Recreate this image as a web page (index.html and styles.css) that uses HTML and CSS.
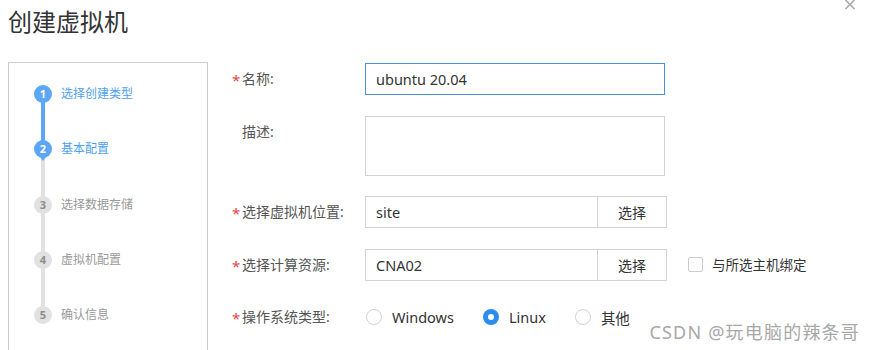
FILE: index.html
```html
<!DOCTYPE html>
<html lang="zh-CN">
<head>
  <meta charset="UTF-8" />
  <meta name="viewport" content="width=device-width, initial-scale=1" />
  <title>创建虚拟机</title>
  <link rel="stylesheet" href="styles.css">
</head>
<body>
  <div class="dialog">
    <h1 class="dialog-title">创建虚拟机</h1>
    <svg class="close" width="12" height="10" viewBox="0 0 12 10">
      <path d="M1.5 0 L10.5 9 M10.5 0 L1.5 9" stroke="#aaa" stroke-width="1.6" fill="none" />
    </svg>

    <div class="dialog-body">
      <ul class="steps">
        <li class="step active"><span class="dot">1</span>选择创建类型</li>
        <li class="step active current"><span class="dot">2</span>基本配置</li>
        <li class="step"><span class="dot">3</span>选择数据存储</li>
        <li class="step"><span class="dot">4</span>虚拟机配置</li>
        <li class="step last"><span class="dot">5</span>确认信息</li>
      </ul>

      <div class="form">
        <div class="row">
          <label class="label"><i class="req">*</i>名称:</label>
          <div class="input focus">ubuntu 20.04</div>
        </div>
        <div class="row">
          <label class="label">描述:</label>
          <div class="textarea"></div>
        </div>
        <div class="row">
          <label class="label"><i class="req">*</i>选择虚拟机位置:</label>
          <div class="picker">
            <div class="input">site</div>
            <button class="pick-btn">选择</button>
          </div>
        </div>
        <div class="row">
          <label class="label"><i class="req">*</i>选择计算资源:</label>
          <div class="picker">
            <div class="input">CNA02</div>
            <button class="pick-btn">选择</button>
          </div>
          <span class="check"><span class="box"></span>与所选主机绑定</span>
        </div>
        <div class="row">
          <label class="label"><i class="req">*</i>操作系统类型:</label>
          <div class="radios">
            <span class="radio"><span class="circle"></span>Windows</span>
            <span class="radio on"><span class="circle"></span>Linux</span>
            <span class="radio"><span class="circle"></span>其他</span>
          </div>
        </div>
      </div>
    </div>
  </div>

  <div class="watermark">CSDN @玩电脑的辣条哥</div>
</body>
</html>
```

FILE: styles.css
```css
body {
  margin: 0;
  background: #fff;
  color: #333;
  font-family: "Noto Sans", "Noto Sans CJK SC", sans-serif;
  overflow: hidden;
}
.dialog { position: relative; padding: 0 8px; }
.dialog-title {
  margin: 0;
  height: 62px;
  padding-top: 6px;
  box-sizing: border-box;
  font-size: 24px;
  font-weight: normal;
  color: #333;
  line-height: 32px;
}
.close {
  position: absolute;
  top: 0;
  right: 17px;
}
.dialog-body { display: flex; }

.steps {
  list-style: none;
  margin: 0;
  padding: 22px 0 0 25px;
  width: 200px;
  height: 300px;
  box-sizing: border-box;
  border: 1px solid #ccc;
}
.step {
  position: relative;
  display: flex;
  gap: 9px;
  height: 55.3px;
  align-items: flex-start;
  font-size: 12px;
  line-height: 18px;
  color: #999;
}
.step::after {
  content: "";
  position: absolute;
  left: 7px;
  top: 12px;
  width: 4px;
  height: 55px;
  background: #e1e1e1;
}
.step.last::after { display: none; }
.step.active { color: #4d9ff2; }
.step.active::after { background: #5ba6f7; }
.step.current::after { background: #e1e1e1; }
.dot {
  position: relative;
  z-index: 1;
  width: 18px;
  height: 18px;
  border-radius: 50%;
  background: #e1e1e1;
  color: #8c8c8c;
  font-size: 11px;
  font-weight: bold;
  text-align: center;
  line-height: 18px;
}
.step.active .dot { background: #5ba6f7; color: #fff; }
.step.current .dot::after {
  content: "";
  position: absolute;
  left: 4px;
  top: 14px;
  border-left: 5px solid transparent;
  border-right: 5px solid transparent;
  border-top: 7px solid #5ba6f7;
}

.form {
  display: flex;
  flex-direction: column;
  gap: 20.5px;
  padding: 1px 0 0 22px;
  font-size: 14px;
}
.row { display: flex; align-items: flex-start; }
.label {
  width: 135px;
  line-height: 32px;
  color: #555;
  padding-left: 12px;
  box-sizing: border-box;
  position: relative;
}
.req {
  position: absolute;
  left: 2px;
  top: 1px;
  font-style: normal;
  color: #e2474a;
  font-size: 15px;
}
.input {
  width: 300px;
  height: 32px;
  box-sizing: border-box;
  border: 1px solid #d2d2d2;
  padding: 0 10px;
  line-height: 30px;
  font-size: 14.5px;
  color: #333;
}
.input.focus { border-color: #4a90d9; }
.textarea {
  width: 300px;
  height: 60px;
  box-sizing: border-box;
  border: 1px solid #d2d2d2;
}
.picker { display: flex; }
.picker .input { width: 232px; border-right: none; }
.pick-btn {
  width: 70px;
  height: 32px;
  border: 1px solid #d2d2d2;
  background: #fff;
  font: inherit;
  color: #333;
  padding: 0;
}
.check {
  display: flex;
  align-items: center;
  gap: 9px;
  margin-left: 21px;
  line-height: 32px;
  color: #333;
  font-size: 13.5px;
}
.box {
  width: 15px;
  height: 15px;
  box-sizing: border-box;
  border: 1px solid #ccc;
  border-radius: 2px;
}
.radios { display: flex; height: 32px; align-items: center; padding-left: 1px; }
.radio {
  display: flex;
  align-items: center;
  gap: 10px;
  margin-right: 29px;
  color: #333;
  font-size: 14.5px;
}
.circle {
  width: 16px;
  height: 16px;
  box-sizing: border-box;
  border: 1px solid #d2d2d2;
  border-radius: 50%;
}
.radio.on .circle { border: 5px solid #2d8cf0; background: #fff; }

.watermark {
  position: absolute;
  right: 13px;
  bottom: 6px;
  font-size: 18px;
  letter-spacing: 1.2px;
  color: #a8a8a8;
}
```
